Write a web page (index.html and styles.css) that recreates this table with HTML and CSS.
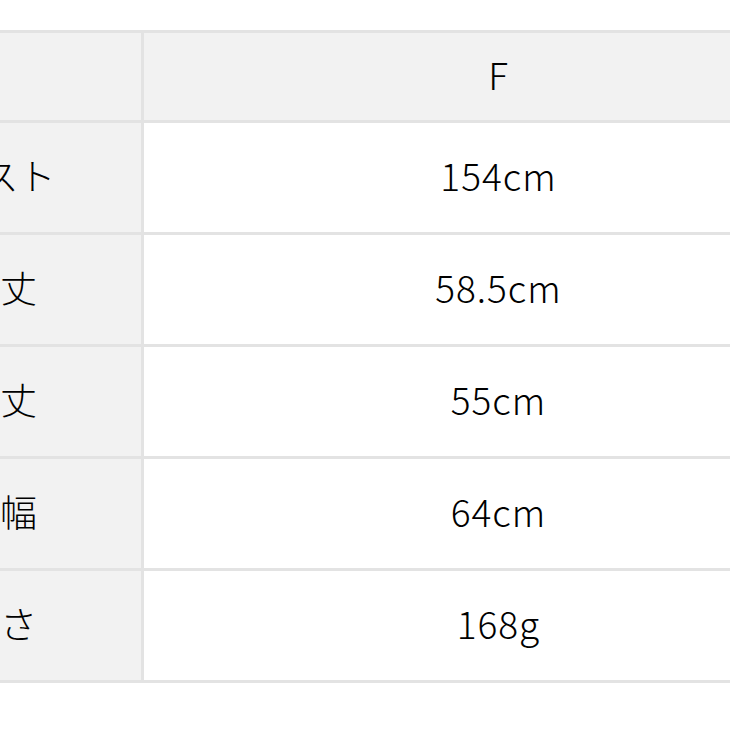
FILE: index.html
```html
<!DOCTYPE html>
<html lang="ja">
<head>
<meta charset="utf-8">
<title>サイズ表</title>
<link rel="stylesheet" href="styles.css">
</head>
<body>
<div class="size-table">
  <div class="cell head label"></div>
  <div class="cell head value">F</div>
  <div class="cell label">バスト</div>
  <div class="cell value">154cm</div>
  <div class="cell label">着丈</div>
  <div class="cell value">58.5cm</div>
  <div class="cell label">袖丈</div>
  <div class="cell value">55cm</div>
  <div class="cell label">身幅</div>
  <div class="cell value">64cm</div>
  <div class="cell label">重さ</div>
  <div class="cell value">168g</div>
</div>
</body>
</html>
```
FILE: styles.css
```css
html, body {
  margin: 0;
  padding: 0;
  background: #ffffff;
  overflow: hidden;
  width: 730px;
  height: 730px;
}

.size-table {
  margin-top: 30px;
  margin-left: -144px;
  width: 996px;
  display: grid;
  grid-template-columns: 282px 708px;
  grid-template-rows: 87px repeat(5, 109px);
  gap: 3px;
  padding: 3px;
  background: #e3e3e3;
  box-sizing: border-box;
  font-family: "Noto Sans CJK JP", "Noto Sans", sans-serif;
  font-size: 37px;
  font-weight: 300;
  color: #000000;
}

.cell {
  display: flex;
  align-items: center;
  justify-content: center;
  background: #ffffff;
  line-height: 1;
  padding-bottom: 4px;
  box-sizing: border-box;
}

.value {
  letter-spacing: 1px;
  text-indent: 1px;
}

.label,
.head {
  background: #f2f2f2;
}
```
